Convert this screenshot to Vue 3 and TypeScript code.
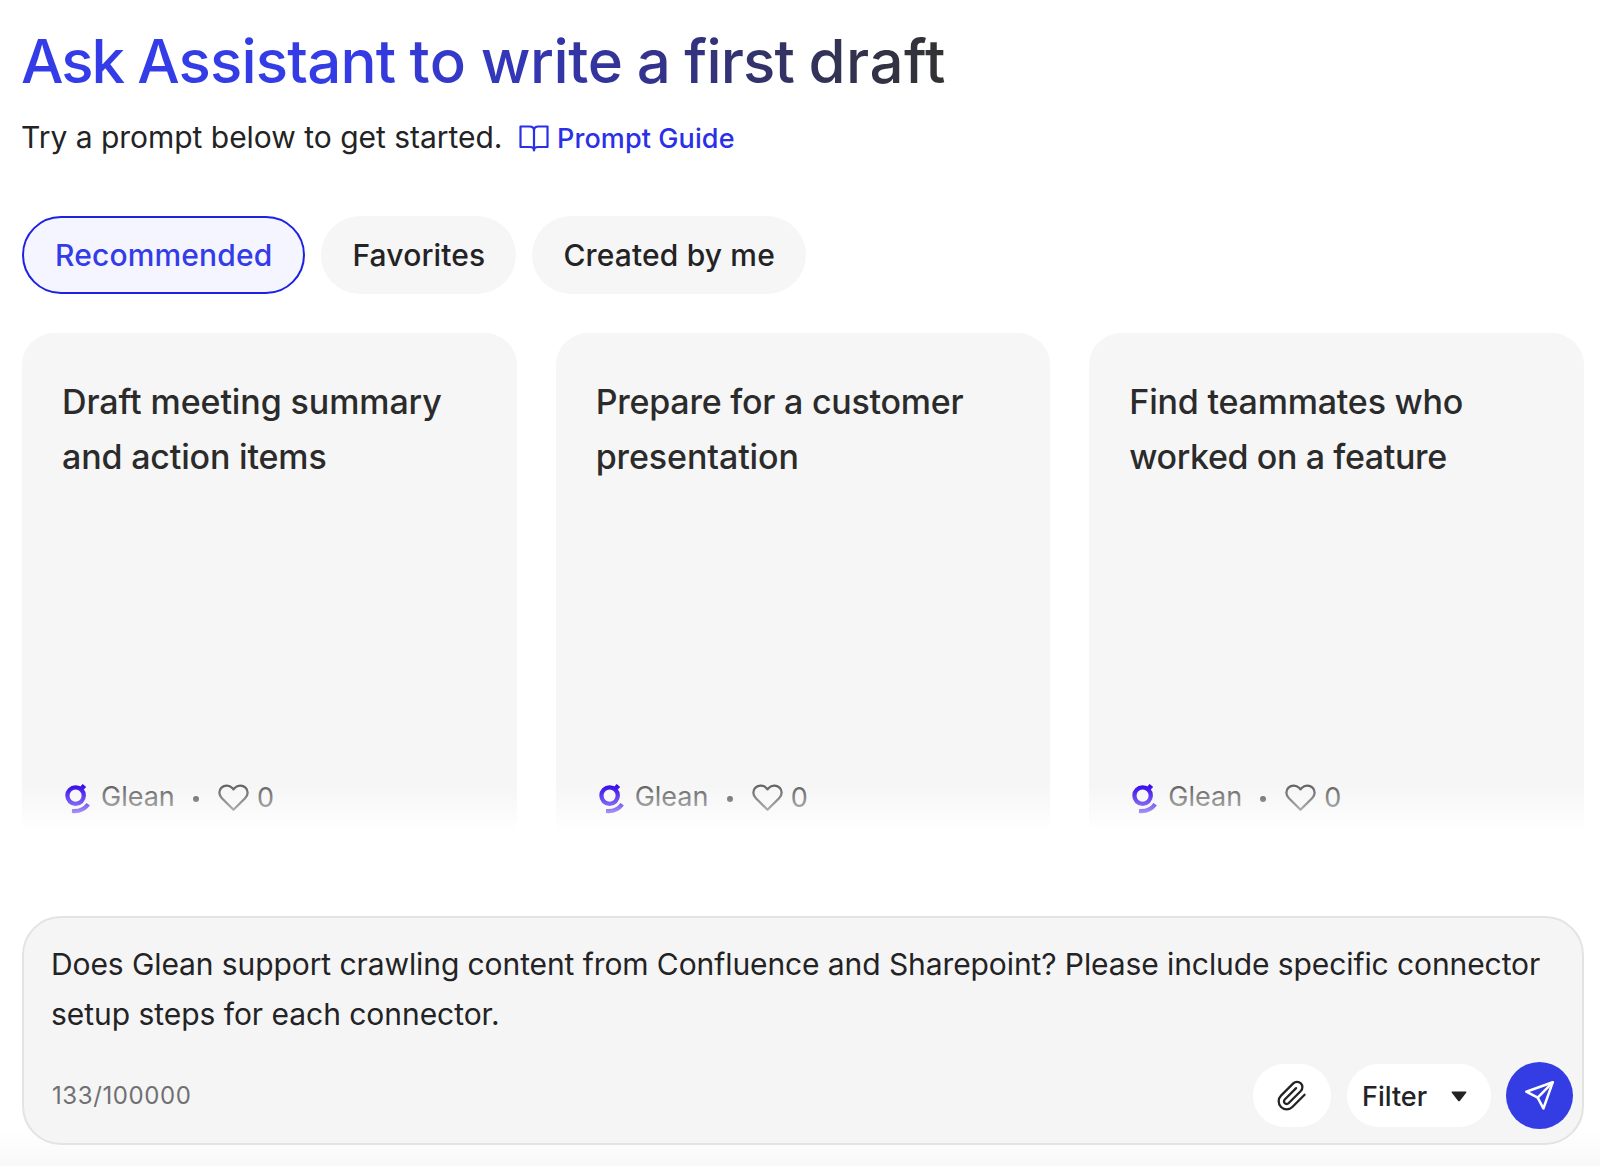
<script setup lang="ts">
import { ref } from 'vue'

interface Line {
  text: string
  spacing: string
}

interface Prompt {
  lines: [Line, Line]
  likes: number
}

const titleWords: Line[] = [
  { text: 'Ask', spacing: '-2.1px' },
  { text: 'Assistant', spacing: '-0.84px' },
  { text: 'to', spacing: '0.4px' },
  { text: 'write', spacing: '-0.4px' },
  { text: 'a', spacing: '-0.84px' },
  { text: 'first', spacing: '-0.84px' },
  { text: 'draft', spacing: '0.5px' },
]

const tabs: string[] = ['Recommended', 'Favorites', 'Created by me']
const activeTab = ref('Recommended')

const prompts: Prompt[] = [
  {
    lines: [
      { text: 'Draft meeting summary', spacing: '-0.1px' },
      { text: 'and action items', spacing: '-0.17px' },
    ],
    likes: 0,
  },
  {
    lines: [
      { text: 'Prepare for a customer', spacing: '-0.24px' },
      { text: 'presentation', spacing: '-0.1px' },
    ],
    likes: 0,
  },
  {
    lines: [
      { text: 'Find teammates who', spacing: '-0.2px' },
      { text: 'worked on a feature', spacing: '-0.38px' },
    ],
    likes: 0,
  },
]
</script>

<template>
  <main class="page">
    <h1 class="title">
      <template v-for="(word, i) in titleWords" :key="word.text">{{ i ? ' ' : '' }}<span :style="{ letterSpacing: word.spacing }">{{ word.text }}</span></template>
    </h1>

    <div class="subtitle">
      <span class="hint">Try a prompt below to get started.</span>
      <a class="guide">
        <svg width="30" height="27" viewBox="0 0 30 27" fill="none" stroke="currentColor" stroke-width="2.2" stroke-linejoin="round" stroke-linecap="round">
          <path d="M1.5 1.5H10.5Q15 1.5 15 5.5Q15 1.5 19.5 1.5H28.5V22H19Q15 22 15 25.5Q15 22 11 22H1.5Z" />
          <path d="M15 5.5V25" />
        </svg>
        <span>Prompt Guide</span>
      </a>
    </div>

    <nav class="tabs">
      <button
        v-for="tab in tabs"
        :key="tab"
        class="tab"
        :class="{ active: tab === activeTab }"
        @click="activeTab = tab"
      >{{ tab }}</button>
    </nav>

    <section class="cards">
      <article v-for="prompt in prompts" :key="prompt.lines[0].text" class="card">
        <h2 class="card-title">
          <span
            v-for="line in prompt.lines"
            :key="line.text"
            class="card-line"
            :style="{ letterSpacing: line.spacing }"
          >{{ line.text }}</span>
        </h2>
        <footer class="meta">
          <svg class="logo" width="28" height="32" viewBox="0 0 28 32" fill="none" stroke="#3509ea">
            <circle cx="12.6" cy="13.6" r="8.2" stroke-width="4.3" />
            <path d="M17.8 7.6L21.4 3.4" stroke-width="4.6" />
            <path d="M9 29Q19.5 30 25.2 22.2" stroke-width="4.2" />
          </svg>
          <span class="author">Glean</span>
          <span class="dot"></span>
          <svg class="heart" width="31" height="28" viewBox="0 0 31 28" fill="none" stroke="currentColor" stroke-width="2.3" stroke-linejoin="round">
            <path d="M15.5 25.8L3.9 14.2C.6 10.8.6 6.4 3.5 3.6C6.7.7 11.3 1 14 3.8L15.5 5.4L17 3.8C19.7 1 24.3.7 27.5 3.6C30.4 6.4 30.4 10.8 27.1 14.2Z" />
          </svg>
          <span class="likes">{{ prompt.likes }}</span>
        </footer>
      </article>
      <div class="fade"></div>
    </section>

    <section class="composer">
      <p class="question"><span>Does Glean support crawling content from Confluence and Sharepoint? Please include specific connector</span><br />setup steps for each connector.</p>
      <div class="toolbar">
        <span class="counter">133/100000</span>
        <button class="attach" aria-label="Attach">
          <svg width="32" height="32" viewBox="0 0 24 24" fill="none" stroke="currentColor" stroke-width="1.7" stroke-linecap="round" stroke-linejoin="round">
            <path d="M21.44 11.05l-9.19 9.19a6 6 0 0 1-8.49-8.49l9.19-9.19a4 4 0 0 1 5.66 5.66l-9.2 9.19a2 2 0 0 1-2.83-2.83l8.49-8.48" />
          </svg>
        </button>
        <button class="filter">
          <span>Filter</span>
          <svg width="16" height="11" viewBox="0 0 16 11"><path d="M1.4.5H14.6Q16 .6 15.2 1.8L9 9.7Q8 10.8 7 9.7L.8 1.8Q0 .6 1.4.5Z" fill="currentColor" /></svg>
        </button>
        <button class="send" aria-label="Send">
          <svg width="67" height="67" viewBox="0 0 67 67" fill="none" stroke="#fff" stroke-width="2.5" stroke-linejoin="round" stroke-linecap="round">
            <path d="M46.7 20.3L20.3 29.7L31.7 35.7L37.4 46.5Z" />
            <path d="M31.7 35.7L46.7 20.3" />
          </svg>
        </button>
      </div>
    </section>
  </main>
</template>

<style>
body {
  margin: 0;
  background: #fff;
}
</style>

<style scoped>
.page {
  box-sizing: border-box;
  height: 1166px;
  padding: 25px 16px 0 22px;
  overflow: hidden;
  display: flex;
  flex-direction: column;
  font-family: Inter, 'Liberation Sans', sans-serif;
  color: #232325;
  background: linear-gradient(to bottom, #fff 1130px, #f8f8f8 1166px);
}

button {
  border: 0;
  padding: 0;
  font: inherit;
  color: inherit;
}

svg {
  display: block;
  flex: none;
}

.title {
  align-self: flex-start;
  margin: 0 0 0 -1px;
  font-size: 60px;
  line-height: 72px;
  font-weight: 500;
  letter-spacing: -0.84px;
  word-spacing: -0.9px;
  white-space: nowrap;
  color: transparent;
  background: linear-gradient(90deg, #343ce8 0%, #343ce5 36%, #333393 66%, #323232 100%);
  background-clip: text;
  -webkit-background-clip: text;
}

.subtitle {
  display: flex;
  align-items: center;
  height: 40px;
  margin-top: 20px;
  font-size: 30px;
  line-height: 40px;
  white-space: nowrap;
}

.hint {
  width: 498px;
  margin-left: -1px;
  letter-spacing: -0.02px;
}

.guide {
  display: flex;
  align-items: center;
  gap: 8px;
  margin-top: 3px;
  color: #2a30e8;
  font-size: 27px;
  font-weight: 500;
  letter-spacing: 0.1px;
}

.tabs {
  display: flex;
  gap: 16px;
  margin-top: 59px;
}

.tab {
  box-sizing: border-box;
  height: 78px;
  padding: 0 31px;
  border-radius: 39px;
  background: #f6f6f6;
  font-size: 30px;
  font-weight: 500;
  letter-spacing: 0.15px;
  white-space: nowrap;
}

.tab.active {
  border: 2px solid #1d22e2;
  background: #f5f5ff;
  color: #343ce8;
}

.cards {
  position: relative;
  display: grid;
  grid-template-columns: repeat(3, 1fr);
  gap: 39px;
  height: 502px;
  margin-top: 39px;
}

.card {
  box-sizing: border-box;
  display: flex;
  flex-direction: column;
  justify-content: space-between;
  padding: 42px 39px 21px 40px;
  border-radius: 32px 32px 0 0;
  background: #f6f6f6;
}

.card-title {
  margin: 0;
  font-size: 34px;
  line-height: 54.5px;
  font-weight: 500;
  white-space: nowrap;
  color: #2b2b2c;
}

.card-line {
  display: block;
}

.meta {
  display: flex;
  align-items: center;
  height: 36px;
  font-size: 27px;
  color: #626262;
}

.logo {
  margin: 4px 0 0 1px;
}

.author {
  width: 74px;
  margin-left: 10px;
}

.dot {
  width: 6px;
  height: 6px;
  margin: 6px 19px 0 18px;
  border-radius: 50%;
  background: #555;
}

.heart {
  margin-top: 3px;
}

.likes {
  margin: 3px 0 0 8px;
}

.fade {
  position: absolute;
  left: 0;
  right: 0;
  bottom: 0;
  height: 50px;
  background: linear-gradient(to bottom, rgba(255, 255, 255, 0), rgba(255, 255, 255, 0.42) 44%, #fff 92%);
}

.composer {
  box-sizing: border-box;
  display: flex;
  flex-direction: column;
  height: 229px;
  margin-top: 81px;
  padding: 21px 9px 13px 27px;
  border: 2px solid #e3e3e3;
  border-radius: 39px;
  background: #f5f5f5;
}

.question {
  margin: 0;
  font-size: 30px;
  line-height: 50px;
  white-space: nowrap;
  letter-spacing: -0.04px;
}

.question span {
  letter-spacing: -0.09px;
}

.toolbar {
  display: flex;
  align-items: center;
  height: 67px;
  margin-top: 23px;
}

.counter {
  flex: 1;
  padding-left: 1px;
  font-size: 24px;
  letter-spacing: 0.6px;
  color: #707072;
}

.attach,
.filter {
  display: flex;
  align-items: center;
  height: 63px;
  border-radius: 32px;
  background: #fff;
}

.attach {
  justify-content: center;
  width: 78px;
}

.filter {
  width: 144px;
  margin-left: 16px;
  padding: 1px 0 0 15px;
  box-sizing: border-box;
  gap: 24px;
  font-size: 27px;
  font-weight: 500;
}

.send {
  width: 67px;
  height: 67px;
  margin-left: 15px;
  border-radius: 50%;
  background: #343ce4;
}
</style>
